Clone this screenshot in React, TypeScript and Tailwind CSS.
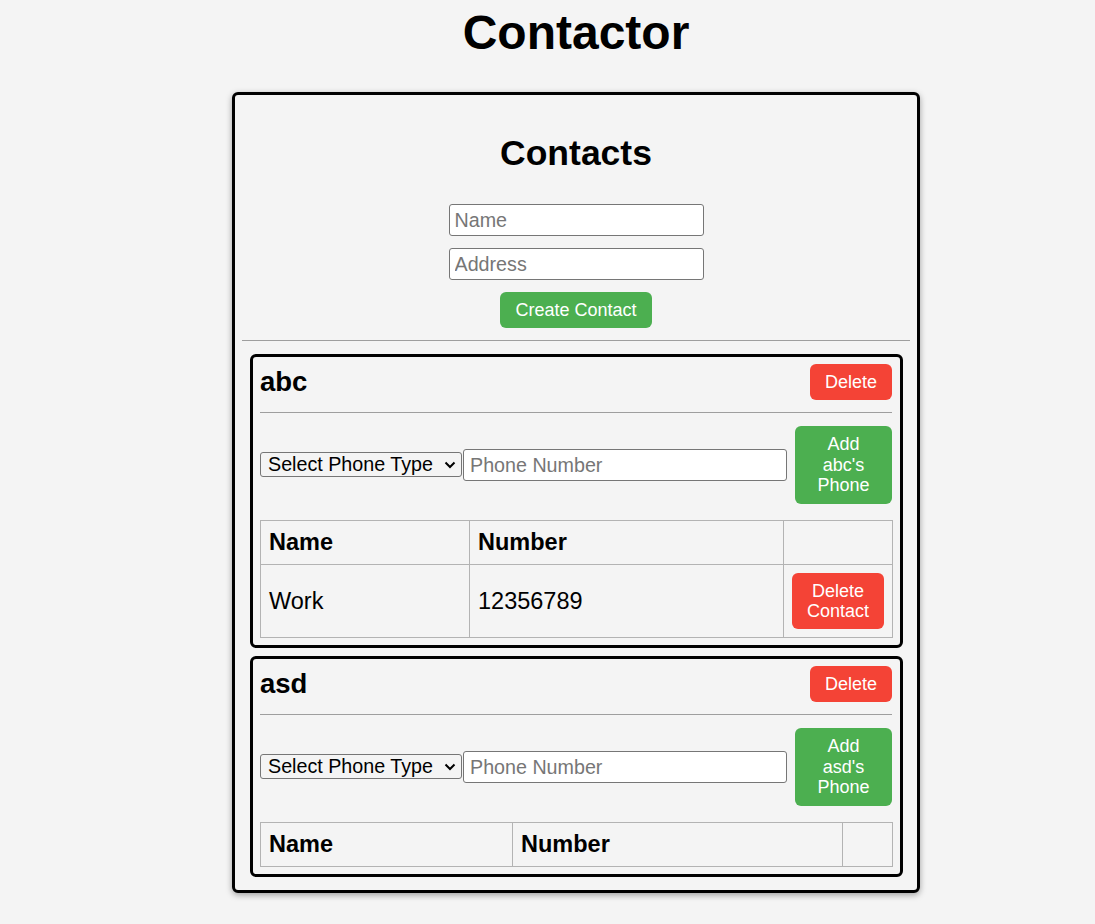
import { useState } from "react";

type Phone = { type: string; number: string };
type Contact = { id: number; name: string; phones: Phone[] };

const initial: Contact[] = [
  { id: 1, name: "abc", phones: [{ type: "Work", number: "12356789" }] },
  { id: 2, name: "asd", phones: [] },
];

function Chevron() {
  return (
    <svg width="12" height="8" viewBox="0 0 12 8" className="pointer-events-none absolute right-[6px] top-1/2 -translate-y-1/2">
      <polyline points="1.5,1.5 6,6 10.5,1.5" fill="none" stroke="#000" strokeWidth="2" />
    </svg>
  );
}

function ContactCard({ contact, onDelete }: { contact: Contact; onDelete: () => void }) {
  const [phoneType, setPhoneType] = useState("");
  const [number, setNumber] = useState("");
  const hasRows = contact.phones.length > 0;

  return (
    <div className="ml-2 mr-[7px] rounded-md border-[3px] border-black pl-[7px] pr-2 pt-[7px] pb-[7px]">
      {/* header */}
      <div className="flex h-[36px] items-center justify-between">
        <h3 className="text-[27.5px] font-bold leading-[32px] text-black">{contact.name}</h3>
        <button
          onClick={onDelete}
          className="h-[36px] rounded-md bg-[#f44336] px-[15px] text-[18px] leading-[1.15] text-white"
        >
          Delete
        </button>
      </div>
      <div className="mt-3 mb-[13px] h-px bg-[#9e9e9e]" />

      {/* phone form */}
      <div className="flex h-[78px] items-center">
        <div className="relative w-[202px]">
          <select
            value={phoneType}
            onChange={e => setPhoneType(e.target.value)}
            className="h-[25px] w-full appearance-none rounded-[3px] border border-[#767676] bg-transparent pl-[7px] text-[19.7px] leading-[23px] text-black outline-none"
          >
            <option value="">Select Phone Type</option>
            <option value="Work">Work</option>
            <option value="Home">Home</option>
            <option value="Mobile">Mobile</option>
          </select>
          <Chevron />
        </div>
        <input
          value={number}
          onChange={e => setNumber(e.target.value)}
          placeholder="Phone Number"
          className="ml-px h-[32px] flex-1 rounded-[3px] border border-[#767676] bg-white px-[6px] text-[19.7px] text-black outline-none placeholder:text-[#767676]"
        />
        <button className="ml-2 h-[78px] w-[97px] rounded-md bg-[#4caf50] px-[15px] py-2 text-[18px] leading-[20.5px] text-white">
          Add {contact.name}'s Phone
        </button>
      </div>

      {/* phones table */}
      <table className="mt-4 w-full table-fixed border-collapse text-[23.5px] text-black">
        <colgroup>
          {hasRows ? (
            <>
              <col className="w-[209px]" />
              <col className="w-[314px]" />
              <col className="w-[109px]" />
            </>
          ) : (
            <>
              <col className="w-[252px]" />
              <col className="w-[330px]" />
              <col className="w-[50px]" />
            </>
          )}
        </colgroup>
        <thead>
          <tr>
            <th className="border border-[#b3b3b3] p-2 text-left font-bold leading-[27px]">Name</th>
            <th className="border border-[#b3b3b3] p-2 text-left font-bold leading-[27px]">Number</th>
            <th className="border border-[#b3b3b3] p-2" />
          </tr>
        </thead>
        <tbody>
          {contact.phones.map((p, i) => (
            <tr key={i}>
              <td className="border border-[#b3b3b3] p-2 leading-[27px]">{p.type}</td>
              <td className="border border-[#b3b3b3] p-2 leading-[27px]">{p.number}</td>
              <td className="border border-[#b3b3b3] p-2">
                <button className="w-full rounded-md bg-[#f44336] px-[15px] py-2 text-[18px] leading-[20px] text-white">
                  Delete Contact
                </button>
              </td>
            </tr>
          ))}
        </tbody>
      </table>
    </div>
  );
}

export default function App() {
  const [contacts, setContacts] = useState<Contact[]>(initial);
  const [name, setName] = useState("");
  const [address, setAddress] = useState("");

  return (
    <div className="min-h-screen bg-[#f4f4f4] pl-[57px] pt-[5px] font-['Liberation_Sans',Arial,sans-serif]">
      <div className="flex flex-col items-center">
        <h1 className="mb-8 text-[48px] font-bold leading-[55px] text-black">Contactor</h1>

        <div className="w-[688px] rounded-md border-[3px] border-black bg-[#f4f4f4] p-[7px] shadow-[0_2px_6px_rgba(0,0,0,0.35)]">
          <h2 className="mt-[31px] mb-[31px] text-center text-[35.5px] font-bold leading-[40px] text-black">Contacts</h2>

          {/* create contact form */}
          <div className="flex flex-col items-center gap-3">
            <input
              value={name}
              onChange={e => setName(e.target.value)}
              placeholder="Name"
              className="h-[32px] w-[255px] rounded-[3px] border border-[#767676] bg-white px-[5px] text-[19.7px] text-black outline-none placeholder:text-[#767676]"
            />
            <input
              value={address}
              onChange={e => setAddress(e.target.value)}
              placeholder="Address"
              className="h-[32px] w-[255px] rounded-[3px] border border-[#767676] bg-white px-[5px] text-[19.7px] text-black outline-none placeholder:text-[#767676]"
            />
            <button className="h-[36px] rounded-md bg-[#4caf50] px-[15px] text-[18px] leading-[1.15] text-white">
              Create Contact
            </button>
          </div>

          <div className="mt-3 h-px bg-[#9e9e9e]" />

          <div className="mt-[13px] flex flex-col gap-2 pb-[6px]">
            {contacts.map(c => (
              <ContactCard
                key={c.id}
                contact={c}
                onDelete={() => setContacts(cs => cs.filter(x => x.id !== c.id))}
              />
            ))}
          </div>
        </div>
      </div>
    </div>
  );
}
